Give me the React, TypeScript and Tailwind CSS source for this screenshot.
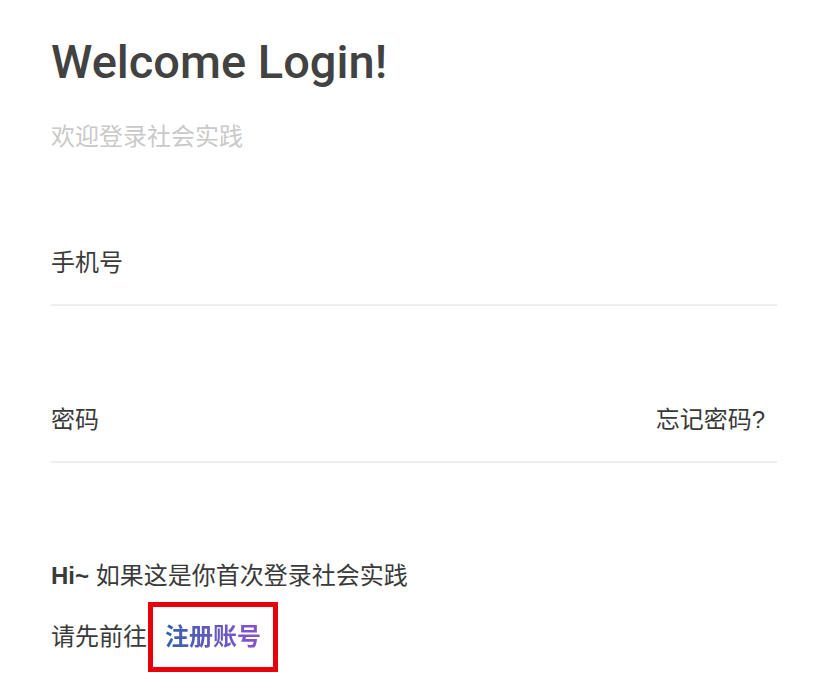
import React from "react";

const cjk = { fontFamily: '"Liberation Sans", "Noto Sans CJK SC", sans-serif' };

export default function App() {
  return (
    <div className="min-h-[688px] w-full bg-white px-[51px] pt-[34px]" style={cjk}>
      <h1
        className="text-[47px] font-medium leading-[56px] text-[#424242]"
        style={{ fontFamily: 'Roboto, "Liberation Sans", sans-serif' }}
      >
        Welcome Login!
      </h1>
      <p className="mt-[31px] text-[24px] leading-[32px] text-[#c9c9c9]">欢迎登录社会实践</p>

      {/* phone */}
      <div className="mt-[94px] flex items-center justify-between border-b-2 border-[#eeeeee] pb-[25px] pr-[12px] text-[24px] leading-[32px] text-[#3a3a3a]">
        <span>手机号</span>
      </div>

      {/* password */}
      <div className="mt-[98px] flex items-center justify-between border-b-2 border-[#eeeeee] pb-[25px] pr-[12px] text-[24px] leading-[32px] text-[#3a3a3a]">
        <span>密码</span>
        <span>忘记密码?</span>
      </div>

      <div className="mt-[97px] text-[24px] leading-[32px] text-[#3a3a3a]">
        <p>
          <span className="font-bold">Hi~</span> 如果这是你首次登录社会实践
        </p>
        <div className="mt-[10px] flex items-center">
          <span>请先前往</span>
          <span className="ml-[1px] border-[5px] border-[#e8000b] px-[12px] py-[14px]">
            <span className="bg-gradient-to-r from-[#2f5fae] to-[#8a4fcf] bg-clip-text font-bold text-transparent">
              注册账号
            </span>
          </span>
        </div>
      </div>
    </div>
  );
}
